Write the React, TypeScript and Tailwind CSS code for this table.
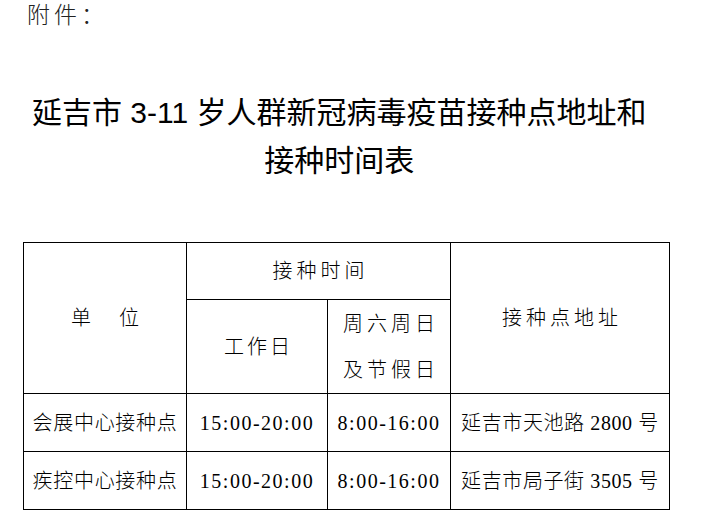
import React from "react";

const cjk = '"Liberation Serif", "Noto Sans CJK SC", serif';

const App = () => {
  return (
    <div
      className="w-[713px] h-[530px] bg-white overflow-hidden"
      style={{ fontFamily: cjk }}>
      <div className="pl-[27px] pt-[1px] text-[23px] leading-[30px] tracking-[4px] text-[#222] font-light">
        附件：
      </div>

      <div className="mt-[58px] pl-[32px]">
        <div
          className="inline-block text-center text-[30px] leading-[48px] text-black"
          style={{ fontFamily: '"Liberation Sans", "Noto Sans CJK SC", sans-serif' }}>
          <div>延吉市 3-11 岁人群新冠病毒疫苗接种点地址和</div>
          <div>接种时间表</div>
        </div>
      </div>

      <table className="ml-[23px] mt-[57px] w-[646px] table-fixed border-collapse text-[20px] text-black font-light">
        <colgroup>
          <col className="w-[163px]" />
          <col className="w-[141px]" />
          <col className="w-[123px]" />
          <col className="w-[219px]" />
        </colgroup>
        <tbody>
          <tr className="h-[57px]">
            <td rowSpan={2} className="border border-black text-center align-middle">
              <div className="flex justify-center gap-[28px]">
                <span>单</span>
                <span>位</span>
              </div>
            </td>
            <td colSpan={2} className="border border-black text-center tracking-[4px] pl-[4px]">
              接种时间
            </td>
            <td rowSpan={2} className="border border-black text-center tracking-[4px] pl-[4px]">
              接种点地址
            </td>
          </tr>
          <tr className="h-[94px]">
            <td className="border border-black text-center tracking-[3px] pl-[3px]">工作日</td>
            <td className="border border-black text-center tracking-[4px] pl-[4px] leading-[46px]">
              <div>周六周日</div>
              <div>及节假日</div>
            </td>
          </tr>
          <tr className="h-[58px]">
            <td className="border border-black text-center tracking-[0.7px]">会展中心接种点</td>
            <td className="border border-black text-center tracking-[1.5px] font-normal">15:00-20:00</td>
            <td className="border border-black text-center tracking-[1.5px] font-normal">8:00-16:00</td>
            <td className="border border-black text-center tracking-[0.6px]">延吉市天池路 2800 号</td>
          </tr>
          <tr className="h-[58px]">
            <td className="border border-black text-center tracking-[0.7px]">疾控中心接种点</td>
            <td className="border border-black text-center tracking-[1.5px] font-normal">15:00-20:00</td>
            <td className="border border-black text-center tracking-[1.5px] font-normal">8:00-16:00</td>
            <td className="border border-black text-center tracking-[0.6px]">延吉市局子街 3505 号</td>
          </tr>
        </tbody>
      </table>
    </div>
  );
};

export default App;
